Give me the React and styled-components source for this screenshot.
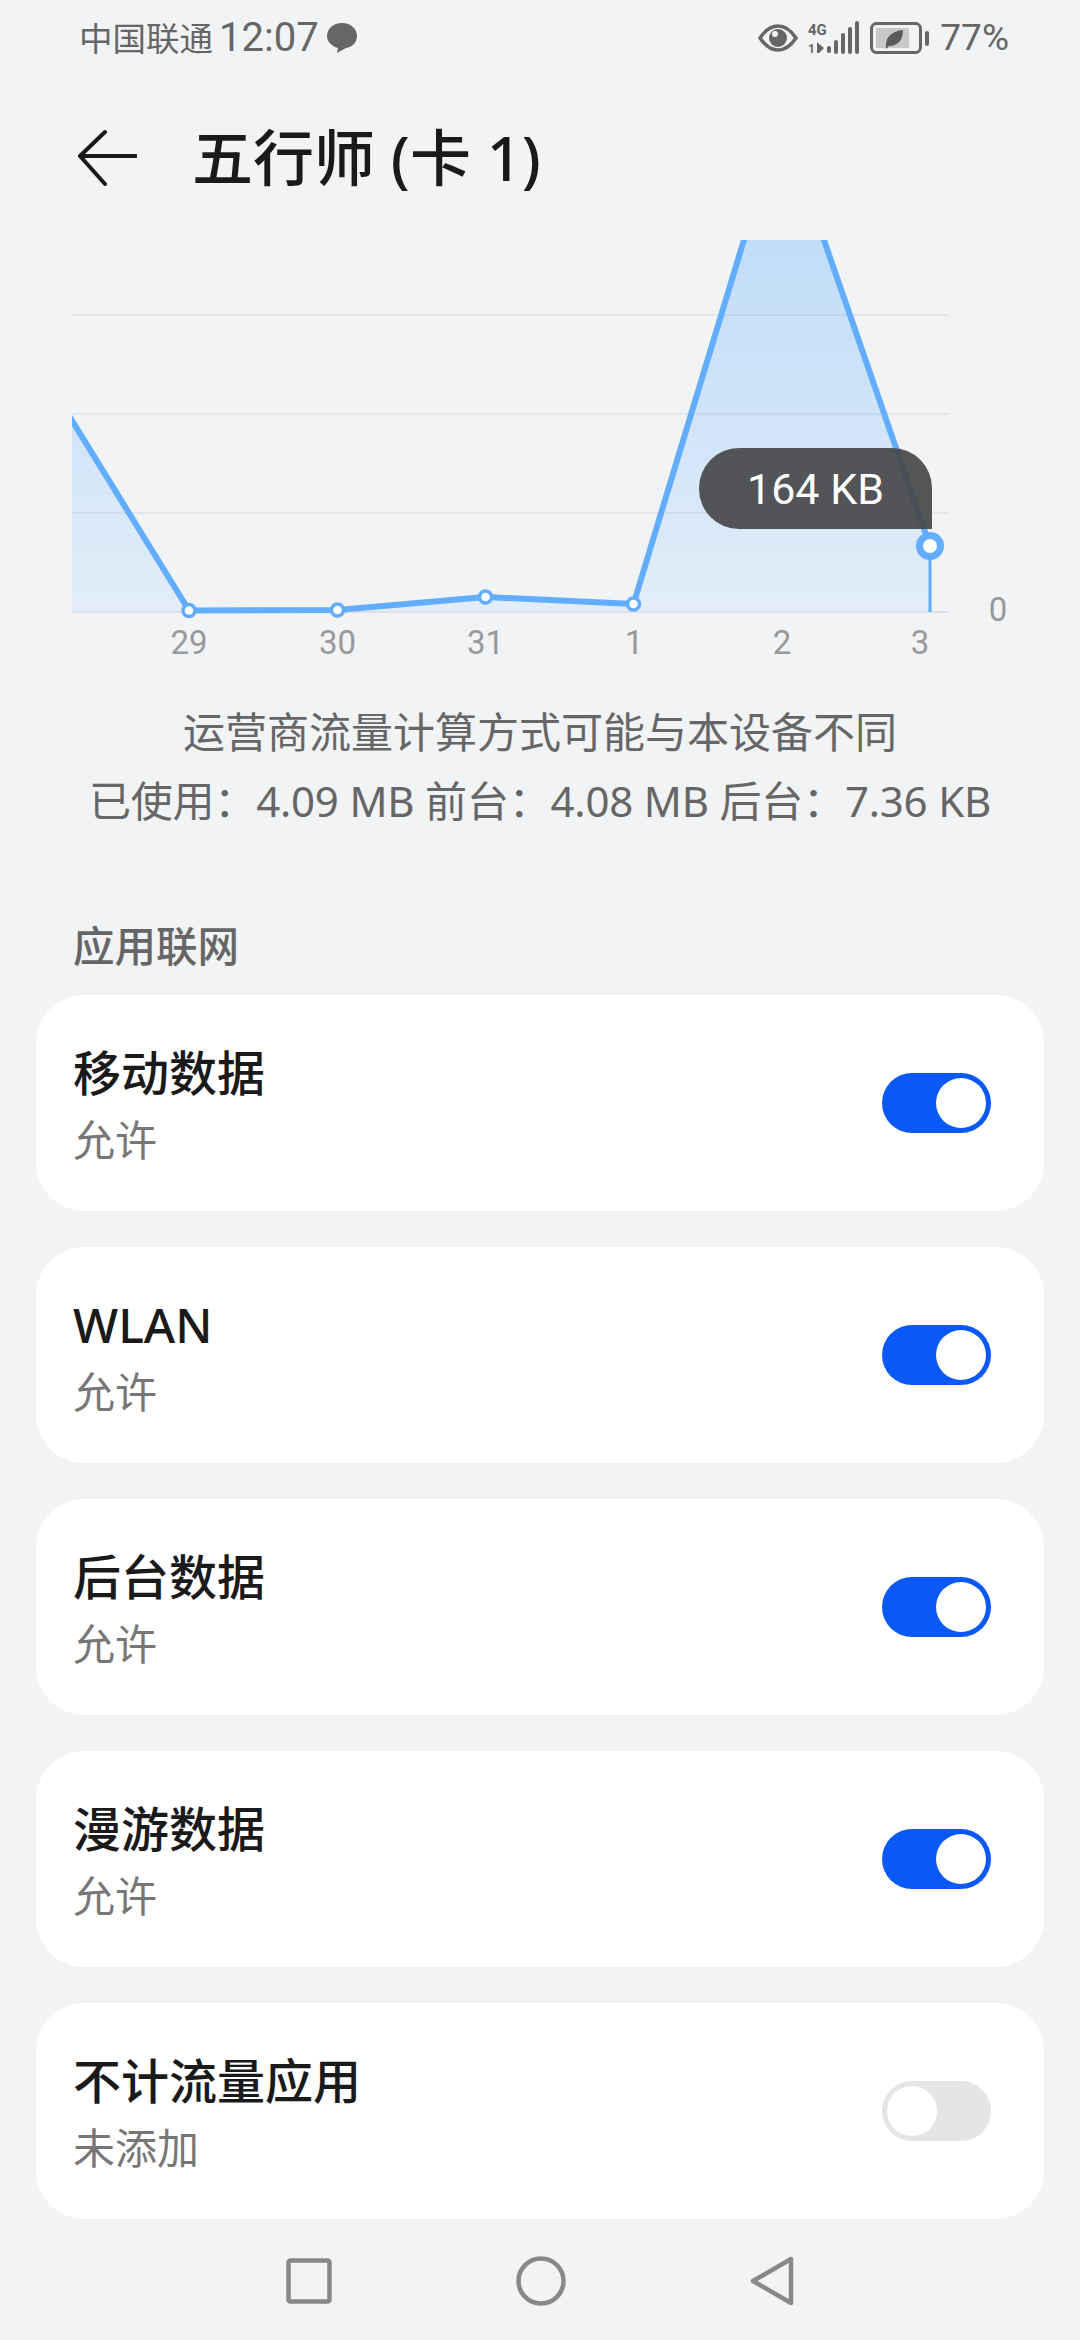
import styled, { createGlobalStyle } from "styled-components"

const GlobalStyle = createGlobalStyle`
    html, body { margin: 0; padding: 0; background: #f1f3f5; }
    body { font-family: "Noto Sans", "Noto Sans CJK SC", sans-serif; }
`;

const CJK = `"Noto Sans", "Noto Sans CJK SC", sans-serif`;

const Page = styled.div`
    width: 1080px;
    height: 2340px;
    background: #f1f3f5;
    overflow: hidden;
    display: flex;
    flex-direction: column;
`;

const StatusBar = styled.div`
    height: 75px;
    box-sizing: border-box;
    padding: 0 71px 0 79px;
    display: flex;
    align-items: center;
    justify-content: space-between;
    color: #666;
`;
const StatusGroup = styled.div`
    display: flex;
    align-items: center;
    gap: ${props => props.$gap || 6}px;
`;
const Carrier = styled.span`
    font-size: 33.5px;
    line-height: 40px;
`;
const Clock = styled.span`
    font-size: 40px;
    line-height: 40px;
    font-family: Roboto, sans-serif;
`;
const Percent = styled.span`
    font-size: 37px;
    line-height: 40px;
    font-family: Roboto, sans-serif;
`;

const Header = styled.div`
    height: 165px;
    box-sizing: border-box;
    padding-left: 77px;
    display: flex;
    align-items: center;
    gap: 55px;
`;
const Title = styled.h1`
    margin: 0;
    font: 500 61px/70px ${CJK};
    color: #1a1a1a;
`;

const ChartBox = styled.div`
    position: relative;
    height: 424px;
    margin-left: 72px;
    width: 960px;
`;
const ChartSvg = styled.svg`
    display: block;
`;
const Tooltip = styled.div`
    position: absolute;
    left: 627px;
    top: 208px;
    width: 233px;
    height: 81px;
    border-radius: 40px 40px 0 40px;
    background: rgba(72, 72, 74, 0.93);
    color: #fff;
    font: 400 43px/83px Roboto, sans-serif;
    text-align: center;
`;

const Note = styled.div`
    text-align: center;
    color: #666;
    font-size: 42px;
    line-height: 69px;
    padding-top: 33px;
`;
const NoteStats = styled.span`
    letter-spacing: -0.2px;
`;

const SectionTitle = styled.div`
    margin: 81px 0 0 73px;
    height: 60px;
    color: #666;
    font: 500 41.5px/60px ${CJK};
`;

const CardList = styled.div`
    display: flex;
    flex-direction: column;
    gap: 36px;
    margin: 19px 36px 0;
`;
const Card = styled.div`
    height: 216px;
    box-sizing: border-box;
    background: #fff;
    border-radius: 48px;
    padding: 0 53px 0 37px;
    display: flex;
    align-items: center;
    justify-content: space-between;
`;
const CardText = styled.div`
    display: flex;
    flex-direction: column;
    padding-top: 8px;
`;
const CardTitle = styled.div`
    font: 500 48px/66px ${CJK};
    color: #1a1a1a;
`;
const CardSub = styled.div`
    font: 400 42px/68px ${CJK};
    color: #777;
`;
const Switch = styled.div`
    width: 109px;
    height: 60px;
    box-sizing: border-box;
    padding: 5px;
    border-radius: 30px;
    background: ${props => (props.$on ? "#0a59f7" : "#e5e5e5")};
    display: flex;
    justify-content: ${props => (props.$on ? "flex-end" : "flex-start")};
`;
const Thumb = styled.div`
    width: 50px;
    height: 50px;
    border-radius: 50%;
    background: #fff;
`;

const NavBar = styled.div`
    flex: 1;
    display: flex;
    align-items: center;
    justify-content: center;
    gap: 184px;
    padding: 2px 0 0;
`;
const NavIcon = styled.svg`
    display: block;
    fill: none;
    stroke: #888;
    stroke-width: 4.5;
    stroke-linejoin: round;
`;

const BackArrow = () => (
    <svg width="60" height="58" viewBox="0 0 60 58" fill="none" stroke="#1a1a1a" strokeWidth="4" strokeLinecap="round" strokeLinejoin="round">
        <path d="M28 3 L3 27 L28 55 M3 27 H59" />
    </svg>
);

const Bubble = () => (
    <svg width="34" height="34" viewBox="0 0 34 34">
        <path d="M17 2 C26 2 32 8 32 15 C32 22 27 26 21 27 L12 32 L13 27 C7 25 2 21 2 15 C2 8 8 2 17 2 Z" fill="#666" />
    </svg>
);

const Eye = () => (
    <svg width="40" height="28" viewBox="0 0 40 28">
        <path d="M2 14 C8 5 14 2 20 2 C26 2 32 5 38 14 C32 23 26 26 20 26 C14 26 8 23 2 14 Z" fill="none" stroke="#666" strokeWidth="3.5" />
        <circle cx="20" cy="14" r="9" fill="#666" />
        <circle cx="17" cy="10" r="3" fill="#f1f3f5" />
    </svg>
);

const Signal = () => (
    <svg width="52" height="34" viewBox="0 0 52 34" fill="#666">
        <text x="0" y="14" fontFamily="Roboto, sans-serif" fontWeight="700" fontSize="15">4G</text>
        <text x="0" y="32" fontFamily="Roboto, sans-serif" fontWeight="700" fontSize="12">1</text>
        <path d="M9 21 V32 H11 L16 27 L11 23 Z" />
        <rect x="19" y="25" width="4" height="7" rx="2" />
        <rect x="26" y="19" width="4" height="14" rx="2" />
        <rect x="33" y="12" width="4" height="21" rx="2" />
        <rect x="40" y="6" width="4" height="27" rx="2" />
        <rect x="47" y="0" width="4" height="33" rx="2" />
    </svg>
);

const Battery = () => (
    <svg width="60" height="32" viewBox="0 0 60 32">
        <rect x="1.5" y="1.5" width="49" height="29" rx="5" fill="none" stroke="#666" strokeWidth="3" />
        <rect x="6" y="6" width="33" height="20" fill="#c8c8c8" />
        <path d="M16 25 C15 15 22 9 33 8 C33 19 27 24 19 24 L16 27 Z" fill="#5a5a5a" />
        <rect x="55" y="9" width="4" height="15" rx="2" fill="#666" />
    </svg>
);

const gridLines = [75, 174, 273];
const dots = [[117, 370.5], [265.5, 370], [413.5, 357], [561.5, 364]];
const axisLabels = [["29", 117], ["30", 265.5], ["31", 413.5], ["1", 562], ["2", 710], ["3", 848]];
// the peak runs off the top of the chart, so it goes above y=0 and gets clipped
const linePoints = "-4,174 117,370.5 265.5,370 413.5,357 561.5,364 678,-20 745,-20 858,306";

const Chart = () => (
    <ChartSvg width="960" height="424" viewBox="0 0 960 424">
        <defs>
            <linearGradient id="area" x1="0" y1="0" x2="0" y2="1">
                <stop offset="0" stopColor="#bfdcf8" />
                <stop offset="1" stopColor="#e2edf8" />
            </linearGradient>
        </defs>
        <path d={`M0 372 L0 180 L${linePoints.split(" ").slice(1).join(" L")} V372 Z`} fill="url(#area)" />
        {gridLines.map(y => <rect key={y} x="0" y={y - 1} width="876" height="2" fill="#1a1a1a" opacity="0.06" />)}
        <rect x="0" y="371" width="876" height="2" fill="#dde1e7" />
        <polyline points={linePoints} fill="none" stroke="#62adfd" strokeWidth="6" strokeLinejoin="round" />
        <rect x="856.5" y="306" width="3" height="66" fill="#62adfd" />
        {dots.map(([x, y]) => <circle key={x} cx={x} cy={y} r="6" fill="#fff" stroke="#62adfd" strokeWidth="3.5" />)}
        <circle cx="858" cy="306" r="10.5" fill="#fff" stroke="#62adfd" strokeWidth="7" />
        {axisLabels.map(([t, x]) => (
            <text key={t} x={x} y="414" textAnchor="middle" fontFamily="Roboto, sans-serif" fontSize="33" fill="#999">{t}</text>
        ))}
        <text x="926" y="381" textAnchor="middle" fontFamily="Roboto, sans-serif" fontSize="33" fill="#999">0</text>
    </ChartSvg>
);

const rows = [
    { title: "移动数据", sub: "允许", on: true },
    { title: "WLAN", sub: "允许", on: true },
    { title: "后台数据", sub: "允许", on: true },
    { title: "漫游数据", sub: "允许", on: true },
    { title: "不计流量应用", sub: "未添加", on: false },
];

const App = () => {
    return (
        <Page>
            <GlobalStyle />
            <StatusBar>
                <StatusGroup>
                    <Carrier>中国联通</Carrier>
                    <Clock>12:07</Clock>
                    <Bubble />
                </StatusGroup>
                <StatusGroup $gap={10}>
                    <Eye />
                    <Signal />
                    <Battery />
                    <Percent>77%</Percent>
                </StatusGroup>
            </StatusBar>
            <Header>
                <BackArrow />
                <Title>五行师 (卡 1)</Title>
            </Header>
            <ChartBox>
                <Chart />
                <Tooltip>164 KB</Tooltip>
            </ChartBox>
            <Note>
                运营商流量计算方式可能与本设备不同<br />
                <NoteStats>已使用：4.09 MB 前台：4.08 MB 后台：7.36 KB</NoteStats>
            </Note>
            <SectionTitle>应用联网</SectionTitle>
            <CardList>
                {rows.map(r => (
                    <Card key={r.title}>
                        <CardText>
                            <CardTitle>{r.title}</CardTitle>
                            <CardSub>{r.sub}</CardSub>
                        </CardText>
                        <Switch $on={r.on}><Thumb /></Switch>
                    </Card>
                ))}
            </CardList>
            <NavBar>
                <NavIcon width="46" height="46" viewBox="0 0 46 46"><rect x="2.5" y="2.5" width="41" height="41" rx="2" /></NavIcon>
                <NavIcon width="50" height="50" viewBox="0 0 50 50"><circle cx="25" cy="25" r="22.5" /></NavIcon>
                <NavIcon width="44" height="50" viewBox="0 0 44 50"><path d="M41 3 V47 L3 25 Z" /></NavIcon>
            </NavBar>
        </Page>
    )
}

export default App
